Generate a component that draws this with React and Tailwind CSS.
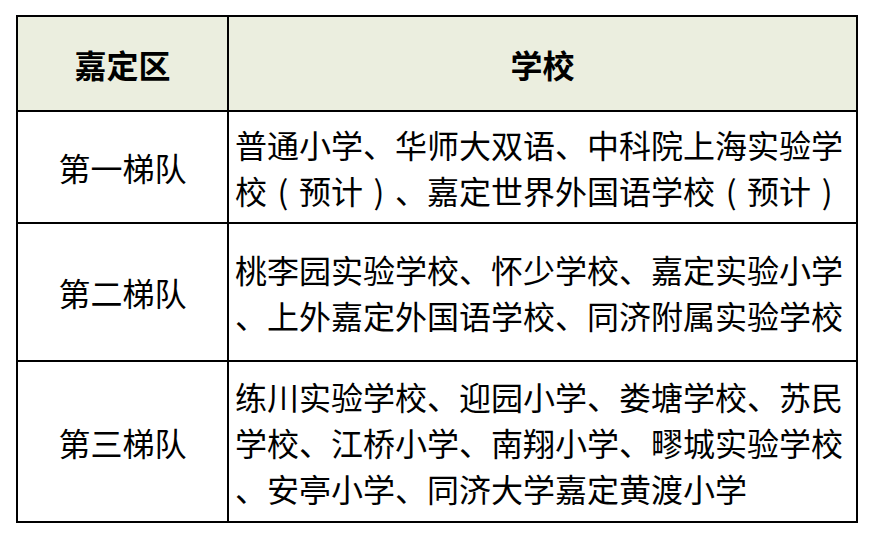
import React from "react";

// fullwidth brackets drawn centred in their cell, like the source font
const P = ({ c }) => <span className="inline-block w-[32px] text-center">{c}</span>;

const rows = [
  {
    name: "第一梯队",
    h: "h-[112px]",
    lines: [
      ["普通小学、华师大双语、中科院上海实验学"],
      ["校", <P key="a" c="(" />, "预计", <P key="b" c=")" />, "、嘉定世界外国语学校", <P key="c" c="(" />, "预计", <P key="d" c=")" />],
    ],
  },
  {
    name: "第二梯队",
    h: "h-[138px]",
    lines: [["桃李园实验学校、怀少学校、嘉定实验小学"], ["、上外嘉定外国语学校、同济附属实验学校"]],
  },
  {
    name: "第三梯队",
    h: "h-[159px]",
    lines: [
      ["练川实验学校、迎园小学、娄塘学校、苏民"],
      ["学校、江桥小学、南翔小学、疁城实验学校"],
      ["、安亭小学、同济大学嘉定黄渡小学"],
    ],
  },
];

const App = () => {
  return (
    <div
      className="w-[874px] h-[538px] bg-white pt-[15px] pl-[16px] text-black"
      style={{ fontFamily: '"Noto Sans CJK SC", "Noto Sans", sans-serif' }}
    >
      <div className="w-[842px] border-2 border-black">
        {/* header */}
        <div className="grid grid-cols-[211px_1fr] h-[95px] bg-[#ebeedf] border-b-2 border-black">
          <div className="flex items-center justify-center border-r-2 border-black text-[32px] font-bold">
            嘉定区
          </div>
          <div className="flex items-center justify-center text-[32px] font-bold">学校</div>
        </div>
        {rows.map((row, i) => (
          <div
            key={row.name}
            className={`grid grid-cols-[211px_1fr] ${row.h} ${i < rows.length - 1 ? "border-b-2 border-black" : ""}`}
          >
            <div className="flex items-center justify-center border-r-2 border-black text-[32px]">
              {row.name}
            </div>
            <div className="flex flex-col justify-center pl-[6px] text-[32px] leading-[46px]">
              {row.lines.map((l, j) => (
                <div key={j} className="whitespace-nowrap">
                  {l}
                </div>
              ))}
            </div>
          </div>
        ))}
      </div>
    </div>
  );
};

export default App;
